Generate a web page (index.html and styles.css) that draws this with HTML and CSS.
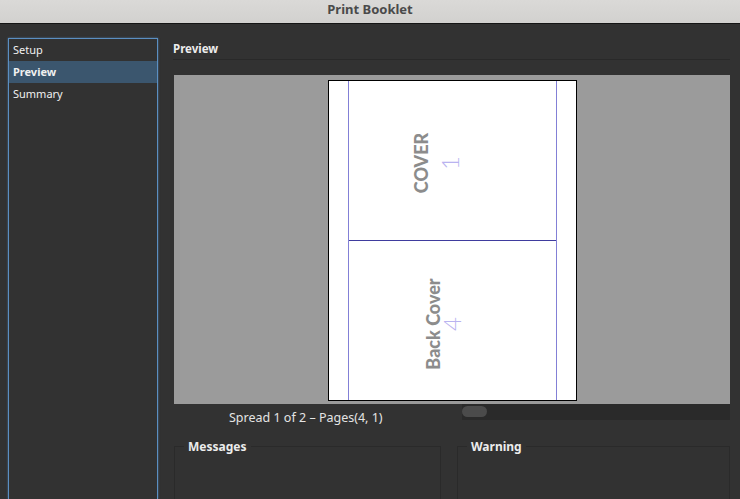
FILE: index.html
```html
<!DOCTYPE html>
<html lang="en">
<head>
    <meta charset="UTF-8">
    <meta name="viewport" content="width=device-width, initial-scale=1.0">
    <title>Print Booklet</title>
    <link rel="stylesheet" href="styles.css">
</head>
<body>
    <div class="titlebar">Print Booklet</div>

    <div class="workspace">
        <ul class="sidebar">
            <li class="nav-item">Setup</li>
            <li class="nav-item active">Preview</li>
            <li class="nav-item">Summary</li>
        </ul>

        <div class="main">
            <div class="section-header">Preview</div>

            <div class="preview-area">
                <div class="page">
                    <div class="sheet">
                        <div class="half">
                            <div class="tag tag-cover">
                                <span class="tag-label">COVER</span>
                                <span class="tag-number">1</span>
                            </div>
                        </div>
                        <div class="half half-bottom">
                            <div class="tag tag-back">
                                <span class="tag-label">Back Cover</span>
                                <span class="tag-number">4</span>
                            </div>
                        </div>
                    </div>
                </div>
            </div>

            <div class="status-row">
                <div class="status-text">Spread 1 of 2 – Pages(4, 1)</div>
                <div class="scroll-track">
                    <div class="scroll-thumb"></div>
                </div>
            </div>

            <div class="groups">
                <fieldset class="group group-messages">
                    <legend>Messages</legend>
                </fieldset>
                <fieldset class="group group-warning">
                    <legend>Warning</legend>
                </fieldset>
            </div>
        </div>
    </div>
</body>
</html>
```

FILE: styles.css
```css
html, body {
    margin: 0;
    padding: 0;
    height: 100%;
}

body {
    font-family: 'Noto Sans', 'DejaVu Sans', sans-serif;
    background-color: #323232;
    color: #e6e6e6;
    overflow: hidden;
}

.titlebar {
    height: 23px;
    line-height: 19px;
    text-align: center;
    font-size: 13px;
    font-weight: bold;
    color: #4a4a4a;
    background: linear-gradient(#dad9d7, #d2d1cf);
    border-bottom: 1px solid #151515;
}

.workspace {
    display: flex;
    box-sizing: border-box;
    height: calc(100% - 24px);
    padding: 14px 10px 0 8px;
}

.sidebar {
    list-style: none;
    margin: 0;
    padding: 0;
    width: 148px;
    border: 1px solid #5b8fc2;
    border-bottom: none;
    box-shadow: 0 0 2px rgba(90, 150, 210, 0.6);
    flex-shrink: 0;
}

.nav-item {
    height: 22px;
    line-height: 21px;
    padding-left: 4px;
    font-size: 11px;
    color: #f0f0f0;
}

.nav-item.active {
    background-color: #3b566e;
    font-weight: bold;
}

.main {
    flex: 1;
    margin-left: 15px;
    display: flex;
    flex-direction: column;
}

.section-header {
    height: 21px;
    line-height: 21px;
    font-size: 11.5px;
    font-weight: bold;
    color: #ececec;
    border-bottom: 1px solid #292929;
    margin-bottom: 15px;
}

.preview-area {
    margin-left: 1px;
    height: 324px;
    padding-top: 5px;
    background-color: #9b9b9b;
    display: flex;
    justify-content: center;
    align-items: flex-start;
}

.page {
    width: 209px;
    height: 319px;
    padding: 0 19px;
    background-color: #fff;
    border: 1px solid #000;
}

.sheet {
    height: 100%;
    border-left: 1px solid #8380d6;
    border-right: 1px solid #8380d6;
    display: flex;
    flex-direction: column;
}

.half {
    flex: 1;
    display: flex;
    justify-content: center;
    align-items: center;
}

.half-bottom {
    border-top: 1px solid #3f3c9e;
}

.tag {
    display: flex;
    flex-direction: column;
    align-items: center;
    line-height: 1;
    white-space: nowrap;
}

.tag-label {
    font-family: 'Lato', 'Noto Sans', sans-serif;
    font-size: 18px;
    font-weight: 900;
    color: #8c8c8c;
}

.tag-number {
    font-family: 'Lato', 'Noto Sans', sans-serif;
    font-size: 24px;
    font-weight: 300;
    color: #b9b3f0;
}

.tag-cover {
    transform: translate(-15px, 2px) rotate(-90deg);
}

.tag-cover .tag-number {
    margin-top: 8px;
}

.tag-back {
    transform: translate(-8px, 3px) rotate(-90deg);
}

.tag-back .tag-number {
    margin-top: -2px;
}

.status-row {
    display: flex;
    height: 16px;
}

.status-text {
    width: 233px;
    padding-left: 56px;
    font-size: 12.5px;
    line-height: 27px;
    color: #e4e4e4;
}

.scroll-track {
    flex: 1;
    background-color: #2a2a2a;
    padding: 2px 0 0 0;
}

.scroll-thumb {
    width: 25px;
    height: 11px;
    border-radius: 6px;
    background-color: #4b4b4b;
}

.groups {
    display: flex;
    gap: 16px;
    margin-top: 18px;
    margin-left: 1px;
    flex: 1;
    min-height: 0;
}

.group {
    margin: 0;
    padding: 0 9px;
    border: 1px solid #2a2a2a;
    border-bottom: none;
    min-width: 0;
}

.group legend {
    padding: 0 4px;
    font-size: 12px;
    font-weight: bold;
    color: #ececec;
}

.group-messages {
    width: 247px;
}

.group-warning {
    flex: 1;
}
```
